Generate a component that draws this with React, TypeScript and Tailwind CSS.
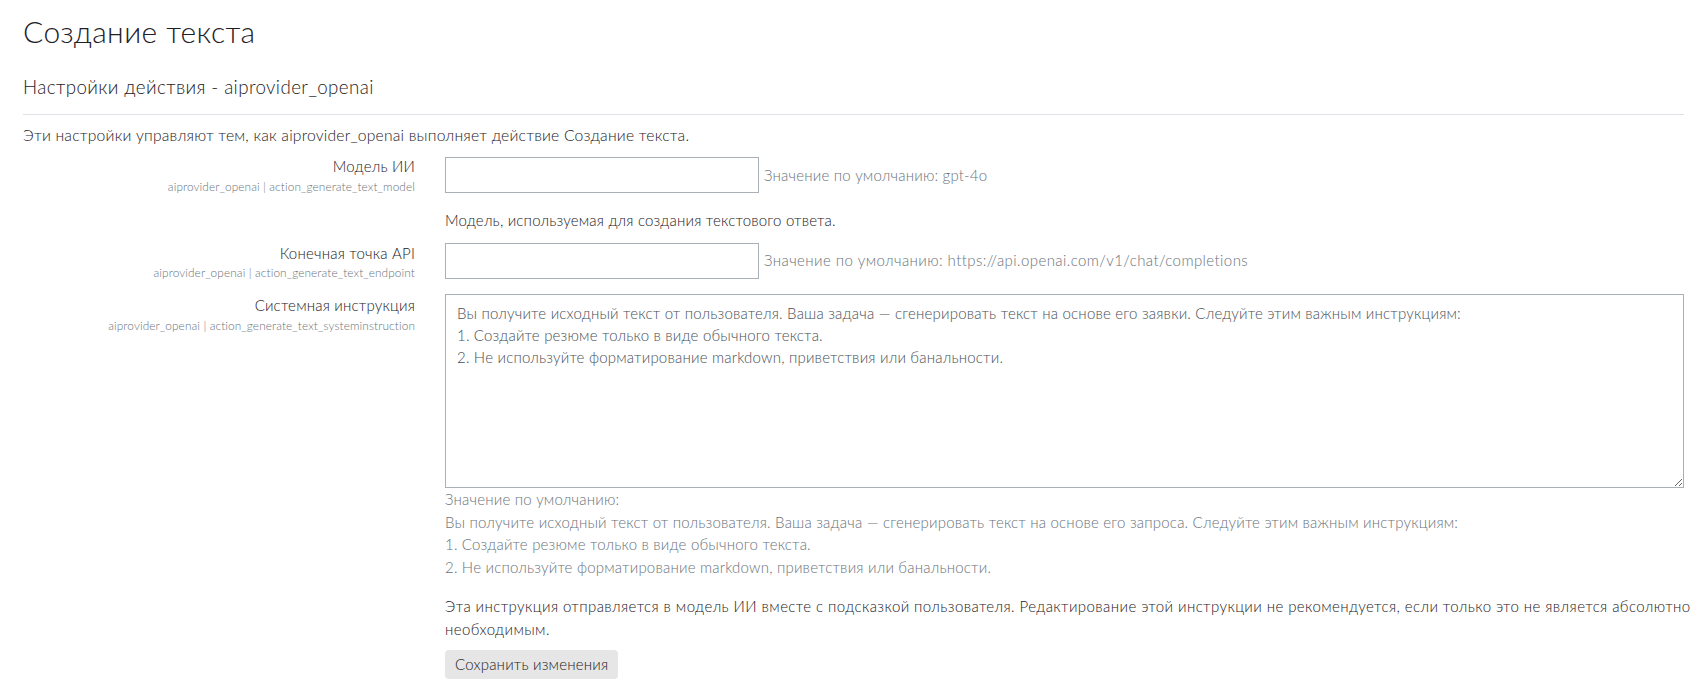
import type { ReactNode } from 'react'

const systemInstruction = `Вы получите исходный текст от пользователя. Ваша задача — сгенерировать текст на основе его заявки. Следуйте этим важным инструкциям:
1. Создайте резюме только в виде обычного текста.
2. Не используйте форматирование markdown, приветствия или банальности.`

interface SettingRowProps {
  label: string
  name: string
  children: ReactNode
}

function SettingRow({ label, name, children }: SettingRowProps) {
  return (
    <div className="flex gap-[30px]">
      {/* Label column */}
      <div className="w-[392px] shrink-0 text-right">
        <div className="text-[15px] leading-[22.5px] text-[#1d2125]">{label}</div>
        <div className="text-[11.8px] leading-[18px] tracking-[0.12px] text-[#6a737b]">{name}</div>
      </div>

      {/* Field column */}
      <div className="min-w-0 flex-1">{children}</div>
    </div>
  )
}

function TextInput() {
  return (
    <input
      type="text"
      defaultValue=""
      className="h-[36px] w-[314px] rounded-none border border-[#a9b0b7] bg-white px-3 text-[15px] text-[#495057] outline-none"
    />
  )
}

export default function App() {
  return (
    <div className="min-h-screen bg-white px-[23px] font-['Lato',sans-serif] text-[15px] leading-[22.5px] font-light tracking-[0.2px] text-[#1d2125]">
      <h2 className="pt-[13px] text-[30px] leading-[36px] font-light tracking-[0.4px] text-[#1d2125]">
        Создание текста
      </h2>

      <h3 className="mt-[27px] text-[18.75px] leading-[22.5px] font-light tracking-[0.4px] text-[#1d2125]">
        Настройки действия - aiprovider_openai
      </h3>

      <hr className="mt-[15px] border-0 border-t border-[#dee2e6]" />

      <p className="mt-[9px] text-[15.7px]">
        Эти настройки управляют тем, как aiprovider_openai выполняет действие Создание текста.
      </p>

      <div className="mt-[9px] flex flex-col">
        {/* Модель ИИ */}
        <SettingRow label="Модель ИИ" name="aiprovider_openai | action_generate_text_model">
          <div className="mt-[2px] flex items-center">
            <TextInput />
            <span className="ml-[5px] text-[#6a737b]">Значение по умолчанию: gpt-4o</span>
          </div>
          <p className="mt-[16px]">Модель, используемая для создания текстового ответа.</p>
        </SettingRow>

        {/* Конечная точка API */}
        <div className="mt-[10px]">
          <SettingRow label="Конечная точка API" name="aiprovider_openai | action_generate_text_endpoint">
            <div className="mt-[1px] flex items-center">
              <TextInput />
              <span className="ml-[5px] tracking-[0.42px] text-[#6a737b]">
                Значение по умолчанию: https://api.openai.com/v1/chat/completions
              </span>
            </div>
          </SettingRow>
        </div>

        {/* Системная инструкция */}
        <div className="mt-[12px]">
          <SettingRow
            label="Системная инструкция"
            name="aiprovider_openai | action_generate_text_systeminstruction"
          >
            <textarea
              defaultValue={systemInstruction}
              className="block h-[194px] w-full rounded-none border border-[#a9b0b7] bg-white px-[11px] py-[7px] text-[15px] leading-[22px] font-light text-[#495057] outline-none"
            />
            <div className="leading-[22.5px] text-[#6a737b]">
              <div>Значение по умолчанию:</div>
              <div>
                Вы получите исходный текст от пользователя. Ваша задача — сгенерировать текст на основе его запроса.
                Следуйте этим важным инструкциям:
              </div>
              <div>1. Создайте резюме только в виде обычного текста.</div>
              <div>2. Не используйте форматирование markdown, приветствия или банальности.</div>
            </div>
            <p className="mt-[17px] tracking-[0.42px]">
              <span className="whitespace-nowrap">
                Эта инструкция отправляется в модель ИИ вместе с подсказкой пользователя. Редактирование этой
                инструкции не рекомендуется, если только это не является абсолютно
              </span>
              <br />
              необходимым.
            </p>
            <button
              type="button"
              className="mt-[10px] rounded-[4px] bg-[#e6e6e6] px-[10px] py-[3px] text-[15px] leading-[23px] font-light text-[#1d2125]"
            >
              Сохранить изменения
            </button>
          </SettingRow>
        </div>
      </div>
    </div>
  )
}
